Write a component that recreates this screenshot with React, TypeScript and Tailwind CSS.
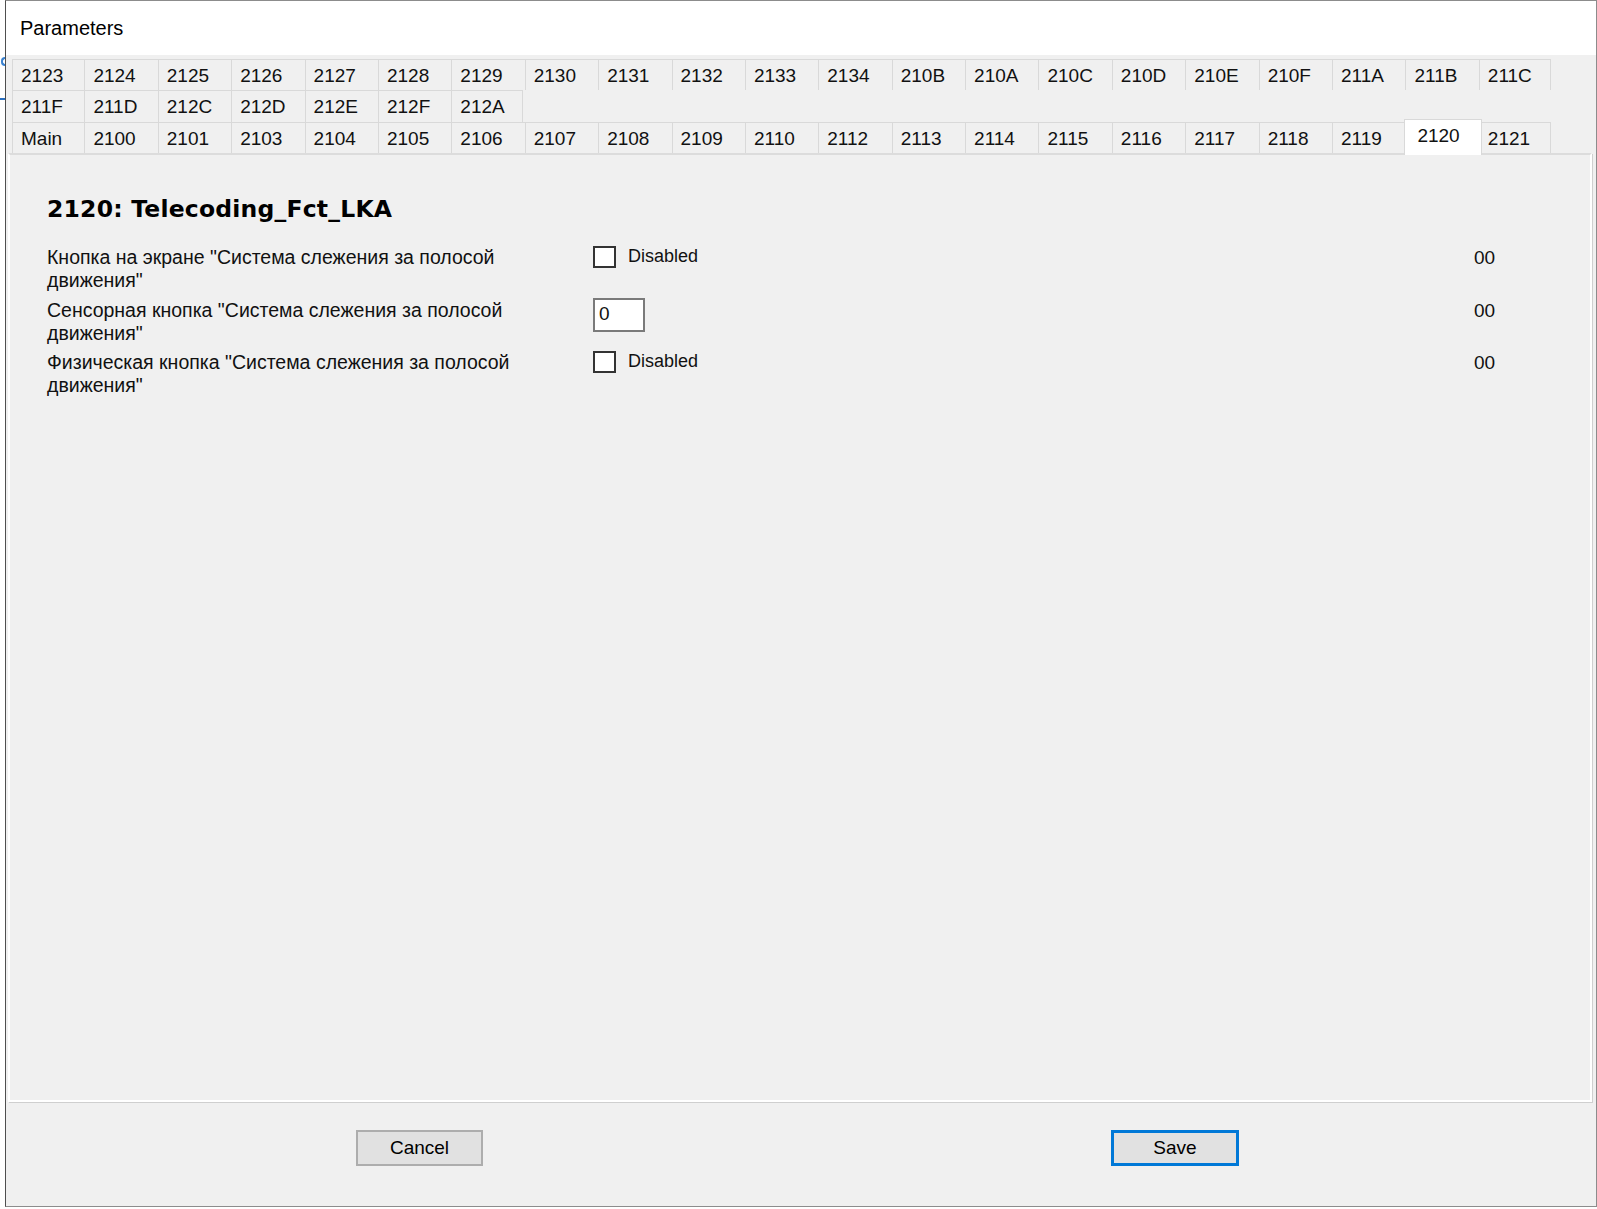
import React from 'react';

const topRow = ['2123', '2124', '2125', '2126', '2127', '2128', '2129', '2130', '2131', '2132', '2133', '2134', '210B', '210A', '210C', '210D', '210E', '210F', '211A', '211B', '211C'];
const midRow = ['211F', '211D', '212C', '212D', '212E', '212F', '212A'];
const mainRow = ['Main', '2100', '2101', '2103', '2104', '2105', '2106', '2107', '2108', '2109', '2110', '2112', '2113', '2114', '2115', '2116', '2117', '2118', '2119', '2120', '2121'];

type Param = {
  first: string;
  second: string;
  kind: 'check' | 'number';
  raw: string;
};

const params: Param[] = [
  { first: 'Кнопка на экране "Система слежения за полосой', second: 'движения"', kind: 'check', raw: '00' },
  { first: 'Сенсорная кнопка "Система слежения за полосой', second: 'движения"', kind: 'number', raw: '00' },
  { first: 'Физическая кнопка "Система слежения за полосой', second: 'движения"', kind: 'check', raw: '00' },
];

const ACTIVE = '2120';

function TabRow({ tabs, height }: { tabs: string[]; height: string }) {
  return (
    <div className={`flex ${height}`}>
      {tabs.map((t) =>
        t === ACTIVE ? (
          <div
            key={t}
            className="relative z-10 -mx-[2px] -mt-[3px] h-[36px] w-[77.4px] shrink-0 bg-white border-t border-x border-[#d9d9d9] pl-[12px] pt-[4px] leading-[23px]"
          >
            {t}
          </div>
        ) : (
          <div
            key={t}
            className="w-[73.4px] shrink-0 flex items-center pl-[8px] border-t border-r border-[#d9d9d9] first:border-l leading-[23px] last:w-[71px]"
          >
            {t}
          </div>
        )
      )}
    </div>
  );
}

function Checkbox() {
  return (
    <div className="flex items-center gap-[12px]">
      <div className="w-[23px] h-[22px] bg-white border-2 border-[#333333]" />
      <span className="text-[18px] leading-[22px] -mt-[3px]">Disabled</span>
    </div>
  );
}

function NumberBox() {
  return (
    <div className="-mt-[1px] w-[52px] h-[34px] bg-white border-2 border-[#7a7a7a] pl-[4px] flex items-center">
      0
    </div>
  );
}

export default function App() {
  return (
    <div
      className="w-[1597px] h-[1209px] bg-white flex text-[#111] text-[19px] overflow-hidden"
      style={{ fontFamily: '"Liberation Sans", Arial, sans-serif' }}
    >
      {/* bits of the window underneath */}
      <div className="w-[5px] shrink-0 flex flex-col">
        <div className="mt-[57px] ml-[1px] h-[9px] w-[4px] border-2 border-r-0 border-[#3b82d0] rounded-l-sm" />
        <div className="mt-[32px] h-[2px] w-[5px] bg-[#2a6fc0]" />
      </div>

      <div className="w-[1592px] h-[1207px] shrink-0 border border-[#8c8c8c] border-l-[#4f4f4f] bg-[#f0f0f0] flex flex-col">
        <div className="h-[54px] shrink-0 bg-white flex items-center pl-[14px] text-[20px] text-black">
          Parameters
        </div>

        <div className="pt-[4px] pl-[6px] shrink-0">
          <TabRow tabs={topRow} height="h-[31px]" />
          <TabRow tabs={midRow} height="h-[32px]" />
          <TabRow tabs={mainRow} height="h-[31px]" />
        </div>

        <div className="ml-[2px] mr-[4px] h-[949px] shrink-0 border-2 border-white border-t-[#dcdcdc] shadow-[1px_1px_0_0_#cfcfcf] pl-[37px] pt-[41px]">
          <h1
            className="text-[23.5px] font-bold leading-[26px] tracking-[0.2px] text-black"
            style={{ fontFamily: '"DejaVu Sans", Verdana, sans-serif' }}
          >
            2120: Telecoding_Fct_LKA
          </h1>

          <div className="mt-[24px] flex flex-col">
            {params.map((p, i) => (
              <div key={i} className="h-[52.5px] flex items-start">
                <div className="w-[546px] shrink-0 text-[19.5px] leading-[23px]">
                  {p.first}
                  <br />
                  {p.second}
                </div>
                <div className="w-[881px] shrink-0">
                  {p.kind === 'check' ? <Checkbox /> : <NumberBox />}
                </div>
                <div className="leading-[23px]">{p.raw}</div>
              </div>
            ))}
          </div>
        </div>

        <div className="flex items-start pt-[28px]">
          <button className="ml-[350px] w-[127px] h-[36px] bg-[#e1e1e1] border-2 border-[#adadad] text-[19px] text-black">
            Cancel
          </button>
          <button className="ml-[628px] w-[128px] h-[36px] bg-[#e1e1e1] border-[3px] border-[#0078d7] text-[19px] text-black">
            Save
          </button>
        </div>
      </div>
    </div>
  );
}
